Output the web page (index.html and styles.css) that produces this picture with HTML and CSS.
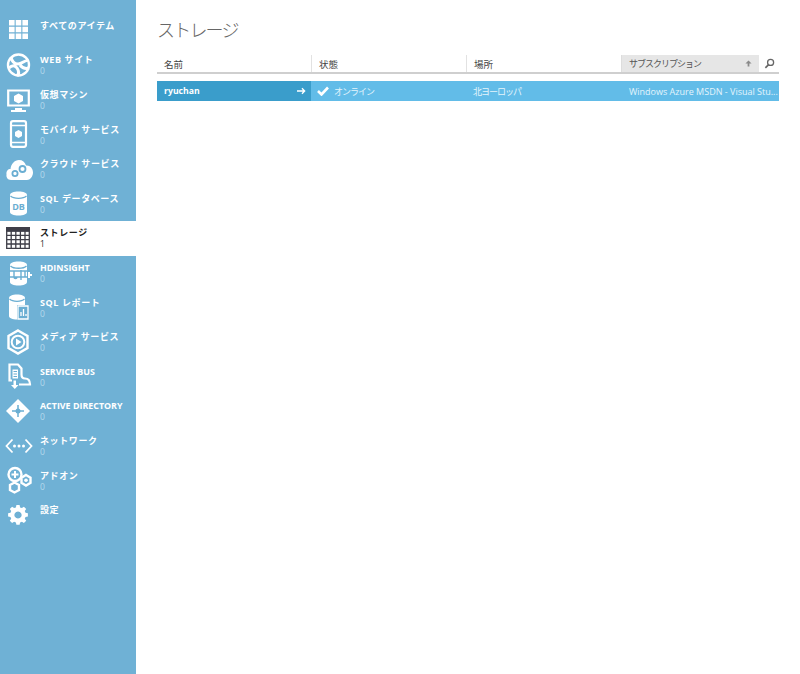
FILE: index.html
```html
<!DOCTYPE html>
<html lang="ja">
<head>
<meta charset="utf-8">
<title>ストレージ</title>
<link rel="stylesheet" href="styles.css">
</head>
<body>
<div class="app">
<nav class="side">
  <a class="item"><svg class="ico" viewBox="0 0 38 34"><path fill="#fff" d="M9 7h5.600v5.600H9zM15.700 7h5.600v5.600h-5.600zM22.400 7H28v5.600h-5.600zM9 13.700h5.600v5.600H9zM15.700 13.700h5.600v5.600h-5.600zM22.400 13.700H28v5.600h-5.600zM9 20.400h5.600V26H9zM15.700 20.400h5.600V26h-5.600zM22.400 20.400H28V26h-5.600z"/></svg><span class="txt"><span class="lab">すべてのアイテム</span></span></a>
  <a class="item"><svg class="ico" viewBox="0 0 38 34"><circle cx="18.500" cy="17" r="10.500" fill="none" stroke="#fff" stroke-width="2.400"/><path fill="none" stroke="#fff" stroke-width="3" d="M11 9c1 5 4 7 7 7 4 0 8-5 10-3M9 20c3-3 6-3 8 0s2 6 0 8M20 17c3 4 6 4 9 3"/></svg><span class="txt"><span class="lab">WEB サイト</span><span class="cnt">0</span></span></a>
  <a class="item"><svg class="ico" viewBox="0 0 38 34"><path fill="none" stroke="#fff" stroke-width="2.200" d="M8.200 7.500h20.600v15H8.200z"/><path fill="#fff" d="M15 25h7v2h4v2H11v-2h4zM18.500 10.500l4.500 2.500v5l-4.500 2.500-4.500-2.500v-5z"/></svg><span class="txt"><span class="lab">仮想マシン</span><span class="cnt">0</span></span></a>
  <a class="item"><svg class="ico" viewBox="0 0 38 34"><rect x="11" y="4.200" width="15" height="25.600" rx="2" fill="none" stroke="#fff" stroke-width="2.200"/><path stroke="#fff" stroke-width="1.500" d="M11 8.500h15M11 25.500h15"/><path fill="#fff" d="M18.500 13l3.500 2v4l-3.500 2-3.500-2v-4z"/></svg><span class="txt"><span class="lab">モバイル サービス</span><span class="cnt">0</span></span></a>
  <a class="item"><svg class="ico" viewBox="0 0 38 34"><path fill="#fff" d="M11 28c-3.500 0-5-3-4.500-5.500C6 19 8 17 10.500 17c.5-5 4-9 8.500-9 3.500 0 6 2 7 5.500 4-.5 7 3 7 7s-3 7.500-6 7.500z"/><circle cx="15" cy="21.500" r="2.600" fill="none" stroke="#6aaed2" stroke-width="1.800"/><circle cx="22.500" cy="17" r="3" fill="none" stroke="#6aaed2" stroke-width="1.800"/></svg><span class="txt"><span class="lab">クラウド サービス</span><span class="cnt">0</span></span></a>
  <a class="item"><svg class="ico" viewBox="0 0 38 34"><path fill="#fff" d="M10 9c0-2 3.500-3.500 8.500-3.500S27 7 27 9v17c0 2-3.500 3.500-8.500 3.500S10 28 10 26z"/><path fill="none" stroke="#6aaed2" stroke-width="1.200" d="M10.500 10c1.500 1.500 4.500 2.300 8 2.300s6.500-.8 8-2.300"/><text class="ico-t" x="18.500" y="24" text-anchor="middle">DB</text></svg><span class="txt"><span class="lab">SQL データベース</span><span class="cnt">0</span></span></a>
  <a class="item sel"><svg class="ico" viewBox="0 0 38 34"><path fill="#3e3e48" d="M6 6h24v4.500H6z"/><path fill="none" stroke="#3e3e48" stroke-width="1.300" d="M6.700 10h22.600v17.300H6.700zM6.700 14.300h22.600M6.700 18.600h22.600M6.700 23h22.600M11.200 10v17M15.800 10v17M20.400 10v17M25 10v17"/></svg><span class="txt"><span class="lab">ストレージ</span><span class="cnt">1</span></span></a>
  <a class="item"><svg class="ico" viewBox="0 0 38 34"><path fill="#fff" d="M10 9c0-2 3.500-3.500 8.500-3.500S27 7 27 9v17c0 2-3.500 3.500-8.500 3.500S10 28 10 26z"/><path fill="none" stroke="#6aaed2" stroke-width="1.400" d="M10.500 10c1.500 1.500 4.500 2.300 8 2.300s6.500-.8 8-2.300M9 15h20M9 21h20M14 15v6c0 2 3 2 3 0M21 14v10M25 15v6"/><path fill="#fff" d="M28 16h2v2h2v2h-2v2h-2z"/></svg><span class="txt"><span class="lab en">HDINSIGHT</span><span class="cnt">0</span></span></a>
  <a class="item"><svg class="ico" viewBox="0 0 38 34"><path fill="#fff" d="M9 8c0-2 3.500-3.500 8-3.500S25 6 25 8v18c0 2-3.500 3.500-8 3.500S9 28 9 26z"/><path fill="none" stroke="#6aaed2" stroke-width="1.200" d="M9.500 9c1.500 1.500 4 2.300 7.500 2.300s6-.8 7.500-2.300"/><path fill="#6aaed2" d="M17 15h12v15H17z"/><path fill="none" stroke="#fff" stroke-width="1.300" d="M18 16h10v13H18zM21 26v-4M23.500 26v-7M26 26v-2"/></svg><span class="txt"><span class="lab">SQL レポート</span><span class="cnt">0</span></span></a>
  <a class="item"><svg class="ico" viewBox="0 0 38 34"><path fill="none" stroke="#fff" stroke-width="2.400" d="M18 5.500l9.500 5.500v12L18 28.500 8.500 23V11z"/><circle cx="18" cy="17" r="6.300" fill="none" stroke="#fff" stroke-width="2"/><path fill="#fff" d="M16 13.500l5.500 3.500-5.500 3.500z"/></svg><span class="txt"><span class="lab">メディア サービス</span><span class="cnt">0</span></span></a>
  <a class="item"><svg class="ico" viewBox="0 0 38 34"><path fill="none" stroke="#fff" stroke-width="2.200" d="M12 21.500H9.500V5.500H18l3.500 4v6c0 3 1.500 4 3.500 4 3 0 5 2 5 6h-11"/><path fill="#fff" d="M12.500 10.500h5.500v9h-5.500z"/><path fill="none" stroke="#6aaed2" d="M13.500 12.500h3.500M13.500 15h3.500M13.500 17.500h3.500"/><path fill="#fff" d="M13.500 21.500h2.500V26h2.500l-3.700 4-3.800-4h2.500z"/></svg><span class="txt"><span class="lab en">SERVICE BUS</span><span class="cnt">0</span></span></a>
  <a class="item"><svg class="ico" viewBox="0 0 38 34"><path fill="#fff" d="M18 5l12 12-12 12L6 17z"/><path fill="none" stroke="#6aaed2" stroke-width="1.500" d="M18 11v12M12 17h12"/><circle cx="18" cy="17" r="2.500" fill="#6aaed2"/></svg><span class="txt"><span class="lab en">ACTIVE DIRECTORY</span><span class="cnt">0</span></span></a>
  <a class="item"><svg class="ico" viewBox="0 0 38 34"><path fill="none" stroke="#fff" stroke-width="1.800" d="M12.500 10.500L6.500 17l6 6.500M25.500 10.500l6 6.500-6 6.500"/><circle cx="14.500" cy="17" r="1.500" fill="#fff"/><circle cx="19" cy="17" r="1.500" fill="#fff"/><circle cx="23.500" cy="17" r="1.500" fill="#fff"/></svg><span class="txt"><span class="lab">ネットワーク</span><span class="cnt">0</span></span></a>
  <a class="item"><svg class="ico" viewBox="0 0 38 34"><circle cx="15" cy="11.500" r="6.500" fill="none" stroke="#fff" stroke-width="2.400"/><path stroke="#fff" stroke-width="2" d="M11.500 11.500h7M15 8v7"/><path fill="none" stroke="#fff" stroke-width="2.400" d="M26 12l4.500 2.700v5.100L26 22.500l-4.500-2.700v-5.100zM14.500 19.500l4.500 2.500v5l-4.500 2.500L10 27v-5z"/><circle cx="26" cy="17.200" r="1.800" fill="#fff"/></svg><span class="txt"><span class="lab">アドオン</span><span class="cnt">0</span></span></a>
  <a class="item"><svg class="ico" viewBox="0 0 38 34"><path fill="#fff" fill-rule="evenodd" d="M16.400 7h3.200l.5 2.400 1.800.7 2-1.400 2.300 2.300-1.400 2 .7 1.800 2.400.5v3.200l-2.400.5-.7 1.800 1.400 2-2.300 2.300-2-1.400-1.800.7-.5 2.400h-3.200l-.5-2.400-1.800-.7-2 1.400-2.300-2.300 1.400-2-.7-1.800-2.400-.5v-3.200l2.400-.5.7-1.800-1.400-2 2.300-2.300 2 1.400 1.800-.7zM18 13.400a3.600 3.600 0 1 0 .01 0z"/></svg><span class="txt"><span class="lab">設定</span></span></a>
</nav>
<main class="main">
  <h1 class="title">ストレージ</h1>
  <div class="head">
    <div class="hc">名前</div>
    <div class="hc sep">状態</div>
    <div class="hc sep">場所</div>
    <div class="hc sep sorted"><span class="kana">サブスクリプション</span><svg class="arrow" viewBox="0 0 8 8"><path fill="#8a8a8a" d="M4 .5L7.500 4H5v3.500H3V4H.5z"/></svg></div>
    <div class="hc search"><svg class="glass" viewBox="0 0 12 12"><circle cx="7.200" cy="4.800" r="3.300" fill="none" stroke="#666" stroke-width="1.400"/><path stroke="#666" stroke-width="1.800" d="M5 7.200L1.500 10.800"/></svg></div>
  </div>
  <div class="row">
    <div class="c name"><span>ryuchan</span><svg class="go" viewBox="0 0 10 8"><path fill="none" stroke="#fff" stroke-width="1.500" d="M0 4h8.500M5.500 1l3 3-3 3"/></svg></div>
    <div class="c"><svg class="chk" viewBox="0 0 12 10"><path fill="none" stroke="#fff" stroke-width="2.600" d="M1 5l3.500 3.500L11 1.500"/></svg><span class="kana">オンライン</span></div>
    <div class="c"><span class="kana">北ヨーロッパ</span></div>
    <div class="c sub">Windows Azure MSDN - Visual Stu...</div>
  </div>
</main>
</div>
</body>
</html>
```

FILE: styles.css
```css
* { box-sizing: border-box; }
html, body { margin: 0; height: 100%; background: #fff; }
body { font-family: "Open Sans", "Noto Sans CJK JP", sans-serif; overflow: hidden; }
.app { display: flex; height: 674px; }
.side {
  width: 136px; flex: none; background: #6fb1d5; padding-top: 13.400px;
  display: flex; flex-direction: column;
}
.item { display: flex; height: 34.600px; color: #fff; }
.item.sel { background: #fff; color: #222; }
.ico { width: 38px; height: 34px; flex: none; }
.ico-t { font: 700 9px "Open Sans", sans-serif; fill: #6aaed2; }
.txt { display: flex; flex-direction: column; padding: 6.500px 0 0 2px; }
.lab { font-size: 9px; line-height: 12px; font-weight: 700; letter-spacing: .6px; white-space: nowrap; }
.lab.en { letter-spacing: 0; font-size: 8.900px; }
.cnt { font-size: 8.500px; line-height: 9px; color: #b5d9ec; }
.sel .cnt { color: #333; }
.main { flex: 1; min-width: 0; padding: 17px 21px 0 21px; }
.title { margin: 0; font-size: 18px; line-height: 24px; font-weight: 300; color: #666; font-family: "Noto Sans CJK JP", sans-serif; letter-spacing: -1.800px; }
.head {
  display: grid; grid-template-columns: 154px 155px 155px 138px 20px;
  margin-top: 14px; height: 19px; border-bottom: 2px solid #cfcfcf;
}
.hc { display: flex; align-items: center; padding-left: 7px; font-size: 9.500px; color: #444; }
.sep { border-left: 1px solid #e2e2e2; }
.sorted { background: #e6e6e6; justify-content: space-between; padding-right: 7px; color: #555; border-left-color: #ddd; }
.kana { font-size: 9px; letter-spacing: -1px; }
.arrow { width: 7px; height: 7px; }
.search { justify-content: center; padding: 0; }
.glass { width: 11px; height: 11px; }
.row {
  display: grid; grid-template-columns: 154px 155px 155px 158px;
  margin-top: 7px; height: 20px; background: #62bce8; color: #e4f4fc; font-size: 9.500px;
}
.c { display: flex; align-items: center; padding-left: 7px; min-width: 0; }
.name { background: #3a9dcb; color: #fff; font-weight: 700; font-size: 8.700px; justify-content: space-between; padding-right: 5px; }
.go { width: 9px; height: 8px; }
.chk { width: 12px; height: 10px; margin: 0 5px 0 -1px; }
.sub { font-size: 9px; font-weight: 400; padding-left: 8px; white-space: nowrap; }
```
